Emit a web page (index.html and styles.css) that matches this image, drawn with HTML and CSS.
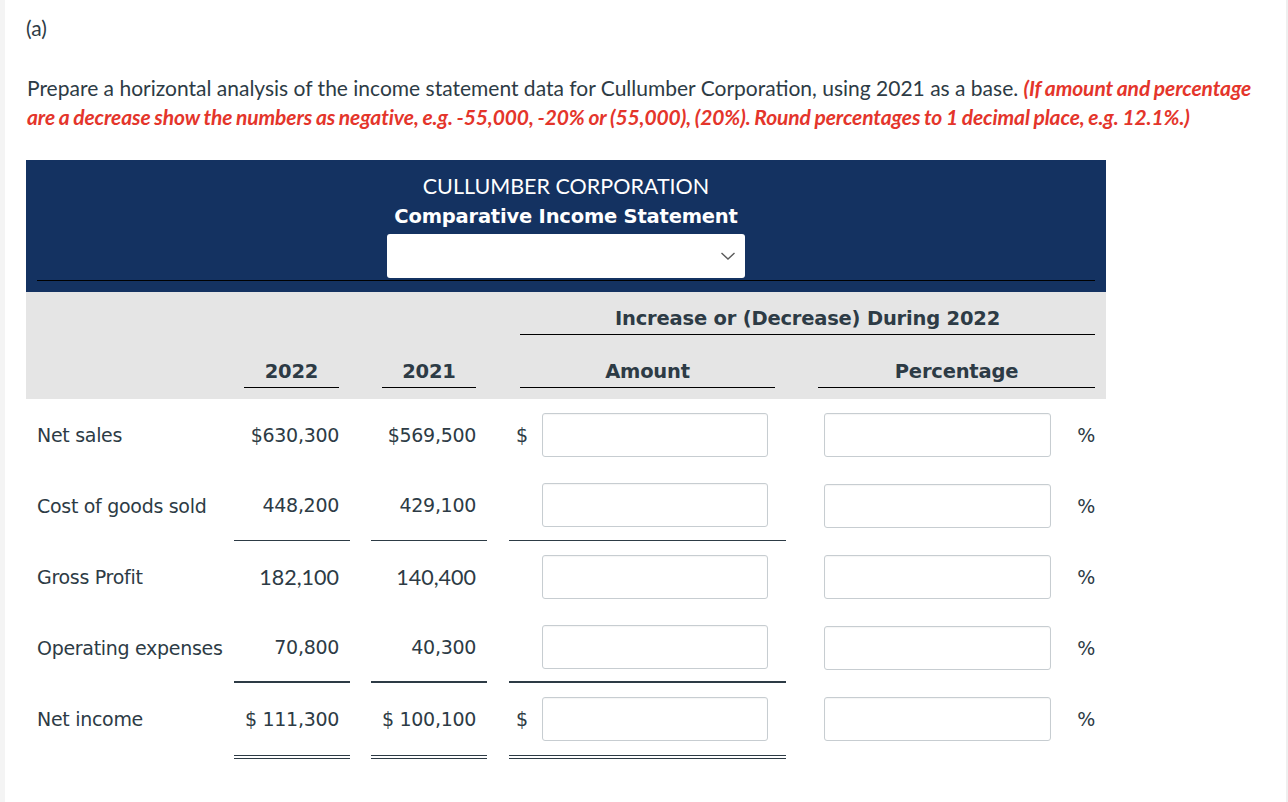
FILE: index.html
```html
<!DOCTYPE html>
<html>
<head>
<meta charset="utf-8">
<link rel="stylesheet" href="styles.css">
</head>
<body>
<div class="page">
  <div class="part">(a)</div>
  <p class="prompt">Prepare a horizontal analysis of the income statement data for Cullumber Corporation, using 2021 as a base. <em class="note">(If amount and percentage are a decrease show the numbers as negative, e.g. -55,000, -20% or (55,000), (20%). Round percentages to 1 decimal place, e.g. 12.1%.)</em></p>

  <div class="sheet">
    <div class="title-block">
      <div class="company">CULLUMBER CORPORATION</div>
      <div class="statement">Comparative Income Statement</div>
      <div class="select">
        <svg class="chev" width="16" height="10" viewBox="0 0 16 10"><polyline points="1.5,2 8,8 14.5,2" fill="none" stroke="#5a5a5a" stroke-width="1.4"/></svg>
      </div>
      <div class="title-rule"></div>
    </div>

    <div class="col-head">
      <div class="hcell span-inc"><span class="hline">Increase or (Decrease) During 2022</span></div>
      <div class="hcell c2022"><span class="hline">2022</span></div>
      <div class="hcell c2021"><span class="hline">2021</span></div>
      <div class="hcell camt"><span class="hline">Amount</span></div>
      <div class="hcell cpct"><span class="hline">Percentage</span></div>
    </div>

    <div class="row">
      <div class="label">Net sales</div>
      <div class="num">$630,300</div>
      <div class="gap"></div>
      <div class="num">$569,500</div>
      <div class="gap"></div>
      <div class="amt"><span class="cur">$</span><span class="box"></span></div>
      <div class="gap"></div>
      <div class="pct"><span class="box"></span><span class="sign">%</span></div>
    </div>

    <div class="row">
      <div class="label">Cost of goods sold</div>
      <div class="num rule1">448,200</div>
      <div class="gap"></div>
      <div class="num rule1">429,100</div>
      <div class="gap"></div>
      <div class="amt rule1"><span class="cur"></span><span class="box"></span></div>
      <div class="gap"></div>
      <div class="pct"><span class="box"></span><span class="sign">%</span></div>
    </div>

    <div class="row">
      <div class="label">Gross Profit</div>
      <div class="num lato">182,100</div>
      <div class="gap"></div>
      <div class="num lato">140,400</div>
      <div class="gap"></div>
      <div class="amt"><span class="cur"></span><span class="box"></span></div>
      <div class="gap"></div>
      <div class="pct"><span class="box"></span><span class="sign">%</span></div>
    </div>

    <div class="row">
      <div class="label">Operating expenses</div>
      <div class="num rule2">70,800</div>
      <div class="gap"></div>
      <div class="num rule2">40,300</div>
      <div class="gap"></div>
      <div class="amt rule2"><span class="cur"></span><span class="box"></span></div>
      <div class="gap"></div>
      <div class="pct"><span class="box"></span><span class="sign">%</span></div>
    </div>

    <div class="row last">
      <div class="label">Net income</div>
      <div class="num rule3">$ 111,300</div>
      <div class="gap"></div>
      <div class="num rule3">$ 100,100</div>
      <div class="gap"></div>
      <div class="amt rule3"><span class="cur">$</span><span class="box"></span></div>
      <div class="gap"></div>
      <div class="pct"><span class="box"></span><span class="sign">%</span></div>
    </div>
  </div>
</div>
</body>
</html>
```

FILE: styles.css
```css
html, body {
  margin: 0;
  padding: 0;
  background: #fff;
}

.page {
  width: 1288px;
  height: 802px;
  box-sizing: border-box;
  border-left: 5px solid #f4f4f4;
  border-right: 2px solid #efefef;
  padding: 14px 0 0 21px;
  color: #2d3b45;
  font-family: Lato, "Liberation Sans", sans-serif;
  overflow: hidden;
}

.part {
  font-size: 21px;
  line-height: 28px;
}

.prompt {
  margin: 31px 0 0 1px;
  font-size: 21px;
  line-height: 29px;
  width: 1245px;
}

.note {
  color: #e4352b;
  font-weight: 700;
  font-style: italic;
  letter-spacing: -0.1px;
  word-spacing: -0.8px;
}

.sheet {
  margin-top: 29px;
  width: 1080px;
}

.title-block {
  background: #143261;
  height: 132px;
  box-sizing: border-box;
  padding-top: 13px;
  display: flex;
  flex-direction: column;
  align-items: center;
  color: #fff;
}

.company {
  font-family: Lato, sans-serif;
  font-size: 21.5px;
  line-height: 26px;
}

.statement {
  font-family: "DejaVu Sans", Verdana, sans-serif;
  font-weight: 700;
  font-size: 19.5px;
  line-height: 35px;
  letter-spacing: -0.2px;
}

.select {
  width: 358px;
  height: 44px;
  background: #fff;
  border-radius: 3px;
  display: flex;
  align-items: center;
  justify-content: flex-end;
  padding-right: 9px;
  box-sizing: border-box;
}

.chev { display: block; }

.title-rule {
  align-self: stretch;
  margin: 2px 11px 0;
  height: 1px;
  background: #000;
}

.col-head {
  background: #e5e5e5;
  height: 107px;
  display: grid;
  grid-template-columns: 208px 116px 21px 116px 22px 277px 21px 299px;
  grid-template-rows: 43px 53px;
  font-family: "DejaVu Sans", Verdana, sans-serif;
  font-weight: 700;
  font-size: 19.5px;
  letter-spacing: -0.2px;
}

.hcell {
  padding: 0 11px;
  display: flex;
  align-items: flex-end;
}

.hline {
  flex: 1;
  text-align: center;
  border-bottom: 1px solid #000;
  line-height: 26px;
  padding-bottom: 2px;
}

.span-inc { grid-column: 6 / 9; grid-row: 1; }
.c2022 { grid-column: 2; grid-row: 2; padding-left: 10px; }
.c2021 { grid-column: 4; grid-row: 2; }
.camt { grid-column: 6; grid-row: 2; }
.cpct { grid-column: 8; grid-row: 2; }

.row {
  display: grid;
  grid-template-columns: 208px 116px 21px 116px 22px 277px 21px 299px;
  height: 71px;
  font-family: "DejaVu Sans", Verdana, sans-serif;
  font-size: 19px;
  letter-spacing: -0.3px;
}

.row.last {
  height: 76px;
}

.row > div {
  display: flex;
  align-items: center;
  box-sizing: border-box;
}

.row.last > div {
  height: 76px;
  padding-bottom: 4px;
}

.row.last > .rule3 {
  padding-bottom: 0;
}

.label { padding-left: 11px; }

.num {
  justify-content: flex-end;
  padding-right: 11px;
}

.lato {
  font-family: Lato, sans-serif;
  font-size: 21.5px;
  letter-spacing: 0;
}

.rule1 { border-bottom: 1px solid #2d3b45; }
.rule2 { border-bottom: 2px solid #2d3b45; }
.rule3 { border-bottom: 4px double #2d3b45; }

.cur {
  width: 33px;
  box-sizing: border-box;
  padding-left: 7px;
}

.box {
  display: block;
  width: 226px;
  height: 44px;
  box-sizing: border-box;
  background: #fff;
  border: 1px solid #c7cdd1;
  border-radius: 3px;
  box-shadow: inset 0 1px 1px rgba(0,0,0,0.04);
}

.pct .box {
  margin-left: 17px;
  width: 227px;
}

.sign {
  margin-left: auto;
  padding-right: 11px;
}
```
